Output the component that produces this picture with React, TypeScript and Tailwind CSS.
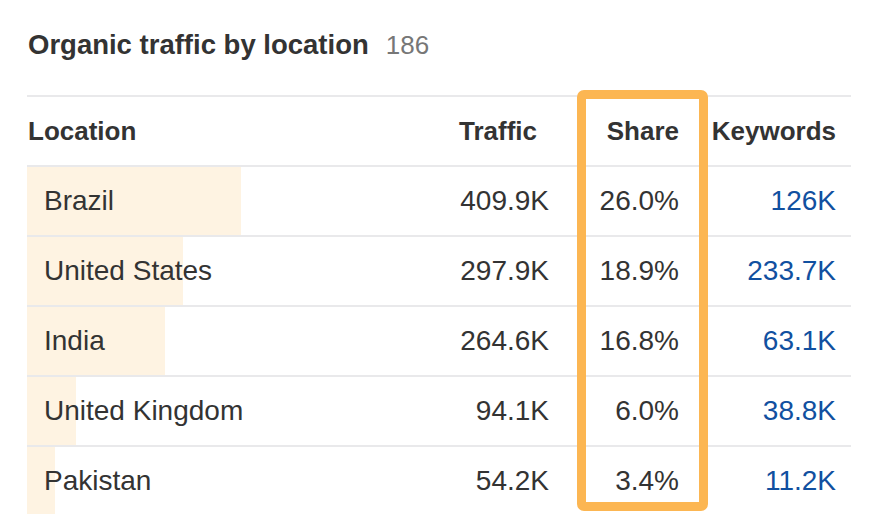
import React from "react"

const rows = [
  { location: "Brazil", traffic: "409.9K", share: 26.0, keywords: "126K" },
  { location: "United States", traffic: "297.9K", share: 18.9, keywords: "233.7K" },
  { location: "India", traffic: "264.6K", share: 16.8, keywords: "63.1K" },
  { location: "United Kingdom", traffic: "94.1K", share: 6.0, keywords: "38.8K" },
  { location: "Pakistan", traffic: "54.2K", share: 3.4, keywords: "11.2K" },
]

export default function App() {
  return (
    <div className="bg-white w-[884px] h-[514px] overflow-hidden relative" style={{ fontFamily: '"Liberation Sans", Arial, sans-serif' }}>
      <div className="pl-[28px] pt-[28px] h-[95px] flex items-start">
        <h2 className="text-[27.5px] leading-[34px] font-bold text-[#333]">
          Organic traffic by location
          <span className="ml-[17px] text-[26px] font-normal text-[#777]">186</span>
        </h2>
      </div>

      <div className="ml-[27px] w-[824px]">
        <div className="flex h-[70px] border-t-2 border-[#e9e9eb] items-center text-[26px] font-bold text-[#333]">
          <div className="flex-1 pl-px">Location</div>
          <div className="w-[157px] text-right pr-[40px]">Traffic</div>
          <div className="w-[131px] text-right pr-[29px]">Share</div>
          <div className="w-[143px] text-right pr-[15px]">Keywords</div>
        </div>

        {rows.map((row, i) => (
          <div key={i} className="flex h-[70px] border-t-2 border-[#e9e9eb] text-[28px] text-[#333]">
            <div className="flex-1 relative flex items-center">
              <div className="absolute left-0 top-0 bottom-0 bg-[#fef3e2]" style={{ width: `${row.share * 8.23}px` }} />
              <span className="relative pl-[17px]">{row.location}</span>
            </div>
            <div className="w-[157px] flex items-center justify-end pr-[28px]">{row.traffic}</div>
            <div className="w-[131px] flex items-center justify-end pr-[29px]">{row.share.toFixed(1)}%</div>
            <div className="w-[143px] flex items-center justify-end pr-[15px] text-[#1150a0]">{row.keywords}</div>
          </div>
        ))}
      </div>

      <div className="absolute left-[577px] top-[90px] w-[131px] h-[421px] border-[9px] border-[#fcb652] rounded-[7px]" />
    </div>
  )
}
